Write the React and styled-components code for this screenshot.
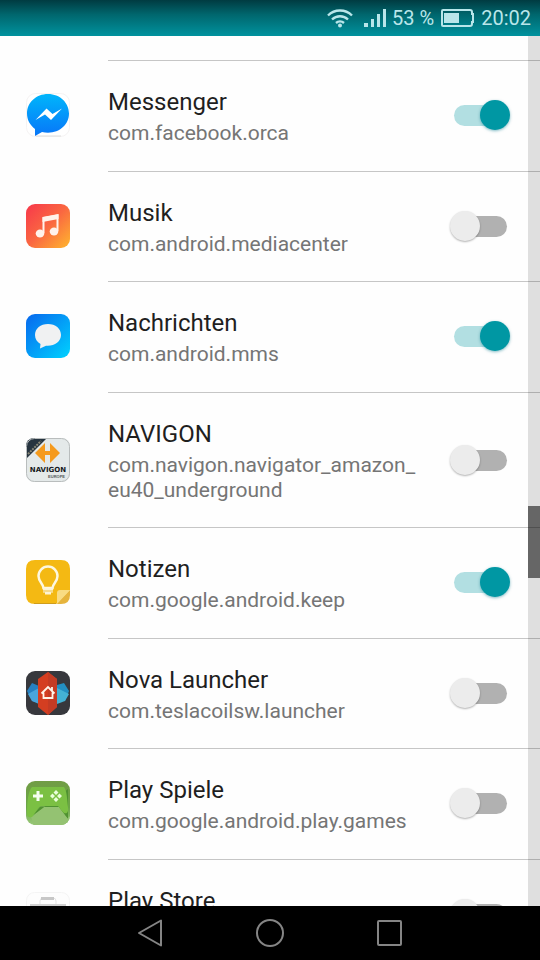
import React from 'react';
import styled, { createGlobalStyle } from 'styled-components';

const GlobalStyle = createGlobalStyle`
  * { box-sizing: border-box; }
  body { margin: 0; background: #fefefe; font-family: Roboto, "Noto Sans", sans-serif; }
`;

const Screen = styled.div`
  display: flex;
  flex-direction: column;
  height: 100vh;
  overflow: hidden;
`;

const StatusBar = styled.header`
  display: flex;
  flex: none;
  align-items: center;
  justify-content: flex-end;
  height: 36px;
  padding-right: 9px;
  background: linear-gradient(#003b41, #00666d 40%, #00929e);
  color: #b9e6ea;
  font-size: 20px;
  line-height: 24px;
`;

const StatusIcon = styled.svg`
  flex: none;
  margin-right: ${({ $gap }) => $gap}px;
`;

const StatusText = styled.span`
  margin-right: ${({ $gap = 0 }) => $gap}px;
  white-space: nowrap;
`;

const Content = styled.main`
  position: relative;
  flex: 1;
  min-height: 0;
  overflow: hidden;
`;

const AppList = styled.ul`
  margin: 0;
  padding: 24px 0 0;
  list-style: none;
`;

const AppRow = styled.li`
  &:nth-child(odd) { padding-bottom: 1px; }
`;

const RowLabel = styled.label`
  display: grid;
  grid-template-columns: 44px minmax(0, 1fr) 60px;
  align-items: center;
  padding-left: 26px;
  padding-right: 30px;
  position: relative;

  &::before {
    content: "";
    position: absolute;
    top: 0;
    left: 108px;
    right: 0;
    height: 1px;
    background: #c6c6c6;
  }
`;

const RowText = styled.span`
  display: flex;
  flex-direction: column;
  gap: 4px;
  padding: 27px 30px 24px 38px;
`;

const AppName = styled.span`
  color: #1f1f1f;
  font-size: 24px;
  line-height: 30px;
`;

const PackageName = styled.span`
  color: #757575;
  font-size: 21px;
  line-height: 25px;
  overflow-wrap: anywhere;
`;

const Switch = styled.input`
  appearance: none;
  position: relative;
  width: 60px;
  height: 30px;
  margin: 0;
  cursor: pointer;

  &::before {
    content: "";
    position: absolute;
    top: 5px;
    left: 4px;
    right: 3px;
    height: 21px;
    border-radius: 11px;
    background: #b1b1b1;
  }

  &::after {
    content: "";
    position: absolute;
    top: 0;
    left: 0;
    width: 30px;
    height: 30px;
    border-radius: 50%;
    background: #ececec;
    box-shadow: 0 1px 2px rgba(0, 0, 0, 0.3);
  }

  &:checked::before { background: #b2dfe2; }
  &:checked::after {
    left: 30px;
    background: #0097a3;
    box-shadow: 0 1px 3px rgba(0, 120, 140, 0.5);
  }
`;

const ScrollTrack = styled.div`
  position: absolute;
  top: 0;
  right: 0;
  bottom: 0;
  display: grid;
  grid-template-rows: 470fr 72fr 328fr;
  width: 12px;
  background: rgba(0, 0, 0, 0.12);
  pointer-events: none;
`;

const ScrollThumb = styled.div`
  grid-row: 2;
  background: rgba(0, 0, 0, 0.54);
`;

const NavBar = styled.nav`
  display: flex;
  flex: none;
  align-items: center;
  justify-content: center;
  gap: 76px;
  height: 54px;
  background: #000;
`;

const NavButton = styled.button`
  display: flex;
  align-items: center;
  justify-content: center;
  width: 44px;
  height: 44px;
  padding: 0;
  border: 0;
  background: none;
  color: #858585;
`;

const IconSvg = ({ children }) => (
  <svg width="44" height="44" viewBox="0 0 44 44" aria-hidden="true">
    {children}
  </svg>
);

const MessengerIcon = () => (
  <IconSvg>
    <defs>
      <linearGradient id="messenger" x2="0" y2="1">
        <stop stopColor="#00b5fb" />
        <stop offset="1" stopColor="#0876f8" />
      </linearGradient>
    </defs>
    <rect x=".5" y=".5" width="43" height="43" rx="9" fill="#fff" stroke="#f5f3f3" />
    <path d="M10 43h25" stroke="#ddd" />
    <path d="M22 1C10 1 1 9.500 1 20.500c0 6.500 3 11.500 8 15.500v7l7-4c2 .5 4 .7 6 .7 12 0 21-8.500 21-19.200S34 1 22 1z" fill="url(#messenger)" />
    <path d="M9.500 27l11-11.500 6 5.500 9.500-5.500-11 11.500-6-5.500z" fill="#fff" />
  </IconSvg>
);

const MusicIcon = () => (
  <IconSvg>
    <defs>
      <linearGradient id="music" x2="1" y2="1">
        <stop stopColor="#f7374b" />
        <stop offset=".5" stopColor="#fa6841" />
        <stop offset="1" stopColor="#ffb62e" />
      </linearGradient>
    </defs>
    <rect width="44" height="44" rx="9" fill="url(#music)" />
    <path d="M17.500 29V14l14-2.500V27" fill="none" stroke="#fff3eb" strokeWidth="2" />
    <path d="M16.500 13l16-3v5l-16 3z" fill="#fff3eb" />
    <ellipse cx="14" cy="29.500" rx="4.300" ry="4" fill="#fff3eb" />
    <ellipse cx="28" cy="27.500" rx="4.300" ry="4" fill="#fff3eb" />
  </IconSvg>
);

const MessagesIcon = () => (
  <IconSvg>
    <defs>
      <linearGradient id="messages" x2="1" y2="1">
        <stop stopColor="#0768ee" />
        <stop offset="1" stopColor="#00d2ff" />
      </linearGradient>
    </defs>
    <rect width="44" height="44" rx="9" fill="url(#messages)" />
    <path d="M22 10c-7.500 0-13 4.500-13 11 0 4 2 7 5.500 9L14 34.500l6-2.800c8 .8 15-4 15-10.700C35 14.500 29.500 10 22 10z" fill="#f0f1f2" />
  </IconSvg>
);

const NavigonIcon = () => (
  <IconSvg>
    <defs>
      <clipPath id="navigonShape"><rect width="44" height="44" rx="8" /></clipPath>
    </defs>
    <g clipPath="url(#navigonShape)">
      <rect width="44" height="44" fill="#e4e9e9" />
      <path d="M0 0h21L0 21z" fill="#263440" />
      <path d="M2 16L15 3" stroke="#8a8877" strokeWidth="2" strokeDasharray="2 1" />
      <path d="M19 5v8h5V5l10 10-10 10v-8h-5v8L9 15z" fill="#f59a1d" />
      <text x="22" y="34" textAnchor="middle" fontFamily="DejaVu Sans, sans-serif" fontWeight="700" fontSize="7" fill="#15191c">NAVIGON</text>
      <text x="39" y="40" textAnchor="end" fontFamily="Liberation Sans, sans-serif" fontWeight="700" fontSize="4" fill="#53585b">EUROPE</text>
    </g>
    <rect x=".5" y=".5" width="43" height="43" rx="8" fill="none" stroke="#b9bdbd" />
  </IconSvg>
);

const KeepIcon = () => (
  <IconSvg>
    <path d="M9 0h26q9 0 9 9v21L30 44H9q-9 0-9-9V9q0-9 9-9z" fill="#f4b913" />
    <path d="M44 30v5q0 9-9 9h-5z" fill="#e6b43d" />
    <path d="M44 30H34q-3 0-3 3v11z" fill="#f9dc83" />
    <path d="M17.500 28c0-4-5-6-5-12a9.500 9.500 0 0 1 19 0c0 6-5 8-5 12z" fill="none" stroke="#fdf7df" strokeWidth="2.500" />
    <path d="M17 28.500h10v4h-2v2h-6v-2h-2z" fill="#fdf4d5" />
    <path d="M17 31h10" stroke="#efc242" />
    <path d="M8 43.500h22" stroke="#cf9d1c" />
  </IconSvg>
);

const NovaIcon = () => (
  <IconSvg>
    <rect width="44" height="44" rx="9" fill="#37383d" />
    <path d="M1 20l5-8 7 3v17l-7-2z" fill="#2781c2" />
    <path d="M2 23l11-6v16L6 30z" fill="#49a5dc" />
    <path d="M31 14l7-2 5 8-4 10h-8z" fill="#238fc2" />
    <path d="M31 17l12 6-4 7-8 3z" fill="#44b2d5" />
    <path d="M22 1l9 7v28l-9 8-10-8V8z" fill="#d43e21" />
    <path d="M22 1l9 7v28l-9 8z" fill="#c43b24" />
    <path d="M15.500 22.500L22 16l6.500 6.500M17.500 21.500V27h9v-5.500M26 16v4" fill="none" stroke="#fff4e9" strokeWidth="1.800" />
  </IconSvg>
);

const GamesIcon = () => (
  <IconSvg>
    <defs>
      <clipPath id="gamesShape"><rect width="44" height="44" rx="9" /></clipPath>
      <linearGradient id="games" x2="0" y2="1">
        <stop stopColor="#719d45" />
        <stop offset=".6" stopColor="#6ba548" />
        <stop offset="1" stopColor="#9ac97a" />
      </linearGradient>
    </defs>
    <g clipPath="url(#gamesShape)">
      <rect width="44" height="44" fill="url(#games)" />
      <path d="M5 36l11-10h17l11 12v6H8z" fill="#94c272" />
      <path d="M5 36l9-10h19l9 12V8z" fill="#4f9230" />
      <path d="M7 36l9-6h17l9 8v6H7z" fill="#94c272" />
      <path d="M6 6h32c3 4 3 12 4 20 1 7-3 8-6 4l-4-5H16c-4 0-7 8-10 11-3 1-5 0-5-4C1 22 2 10 6 6z" fill="#7bc043" />
    </g>
    <path d="M12 10v10M7 15h10" stroke="#f5fff0" strokeWidth="3" />
    <path d="M30 9l2.500 2.500L30 14l-2.500-2.500zm0 7l2.500 2.500L30 21l-2.500-2.500zm-3.500-3.500L29 15l-2.500 2.500L24 15zm7 0L36 15l-2.500 2.500L31 15z" fill="#e9ffdb" />
  </IconSvg>
);

const StoreIcon = () => (
  <IconSvg>
    <rect x=".5" y=".5" width="43" height="43" rx="8" fill="#fdfdfd" stroke="#f4f4f4" />
    <path d="M14 13V9q0-3 3-3h10q3 0 3 3v4" fill="none" stroke="#e3e3e3" strokeWidth="1" />
    <path d="M15 6.500h13" stroke="#c7c7c7" strokeWidth="3" />
    <path d="M4 12h36v27H4z" fill="#d1d1d1" />
  </IconSvg>
);

const apps = [
  { name: 'Messenger', pkg: 'com.facebook.orca', on: true, Icon: MessengerIcon },
  { name: 'Musik', pkg: 'com.android.mediacenter', on: false, Icon: MusicIcon },
  { name: 'Nachrichten', pkg: 'com.android.mms', on: true, Icon: MessagesIcon },
  { name: 'NAVIGON', pkg: 'com.navigon.navigator_amazon_eu40_underground', on: false, Icon: NavigonIcon },
  { name: 'Notizen', pkg: 'com.google.android.keep', on: true, Icon: KeepIcon },
  { name: 'Nova Launcher', pkg: 'com.teslacoilsw.launcher', on: false, Icon: NovaIcon },
  { name: 'Play Spiele', pkg: 'com.google.android.play.games', on: false, Icon: GamesIcon },
  { name: 'Play Store', pkg: 'com.android.vending', on: false, Icon: StoreIcon },
];

export default function App() {
  return (
    <Screen>
      <GlobalStyle />
      <StatusBar>
        <StatusIcon $gap={11} width="26" height="20" viewBox="0 0 26 20" fill="none" stroke="currentColor" strokeWidth="2.400" aria-hidden="true">
          <path d="M1 7.500a17 17 0 0 1 24 0M5 11.500a11.500 11.500 0 0 1 16 0M9 15a6 6 0 0 1 8 0" />
          <circle cx="13" cy="17.500" r="2" fill="currentColor" stroke="none" />
        </StatusIcon>
        <StatusIcon $gap={5} width="23" height="19" viewBox="0 0 23 19" fill="currentColor" aria-hidden="true">
          <path d="M0 14h4v4H0zM7 10h3v8H7zM13 5h3v13h-3zM19 0h3v18h-3z" />
        </StatusIcon>
        <StatusText $gap={7}>53 %</StatusText>
        <StatusIcon $gap={7} width="33" height="18" viewBox="0 0 33 18" aria-hidden="true">
          <path d="M2 1h27q2 0 2 2v2h1v8h-1v2q0 2-2 2H2q-1 0-1-1V2q0-1 1-1z" fill="none" stroke="currentColor" strokeWidth="2" />
          <path d="M3 4h15v10H3z" fill="currentColor" />
        </StatusIcon>
        <StatusText>20:02</StatusText>
      </StatusBar>
      <Content>
        <AppList>
          {apps.map(({ name, pkg, on, Icon }) => (
            <AppRow key={pkg}>
              <RowLabel>
                <Icon />
                <RowText>
                  <AppName>{name}</AppName>
                  <PackageName>{pkg}</PackageName>
                </RowText>
                <Switch type="checkbox" role="switch" defaultChecked={on} />
              </RowLabel>
            </AppRow>
          ))}
        </AppList>
        <ScrollTrack><ScrollThumb /></ScrollTrack>
      </Content>
      <NavBar>
        <NavButton type="button" aria-label="Zurück">
          <svg width="28" height="28" viewBox="0 0 28 28" fill="none" stroke="currentColor" strokeWidth="2" strokeLinejoin="round">
            <path d="M25 1.500v25L3 14z" />
          </svg>
        </NavButton>
        <NavButton type="button" aria-label="Startseite">
          <svg width="28" height="28" viewBox="0 0 28 28" fill="none" stroke="currentColor" strokeWidth="2">
            <circle cx="14" cy="14" r="13" />
          </svg>
        </NavButton>
        <NavButton type="button" aria-label="Letzte Apps">
          <svg width="28" height="28" viewBox="0 0 28 28" fill="none" stroke="currentColor" strokeWidth="2" strokeLinejoin="round">
            <rect x="2" y="2" width="23" height="24" rx="1" />
          </svg>
        </NavButton>
      </NavBar>
    </Screen>
  );
}
